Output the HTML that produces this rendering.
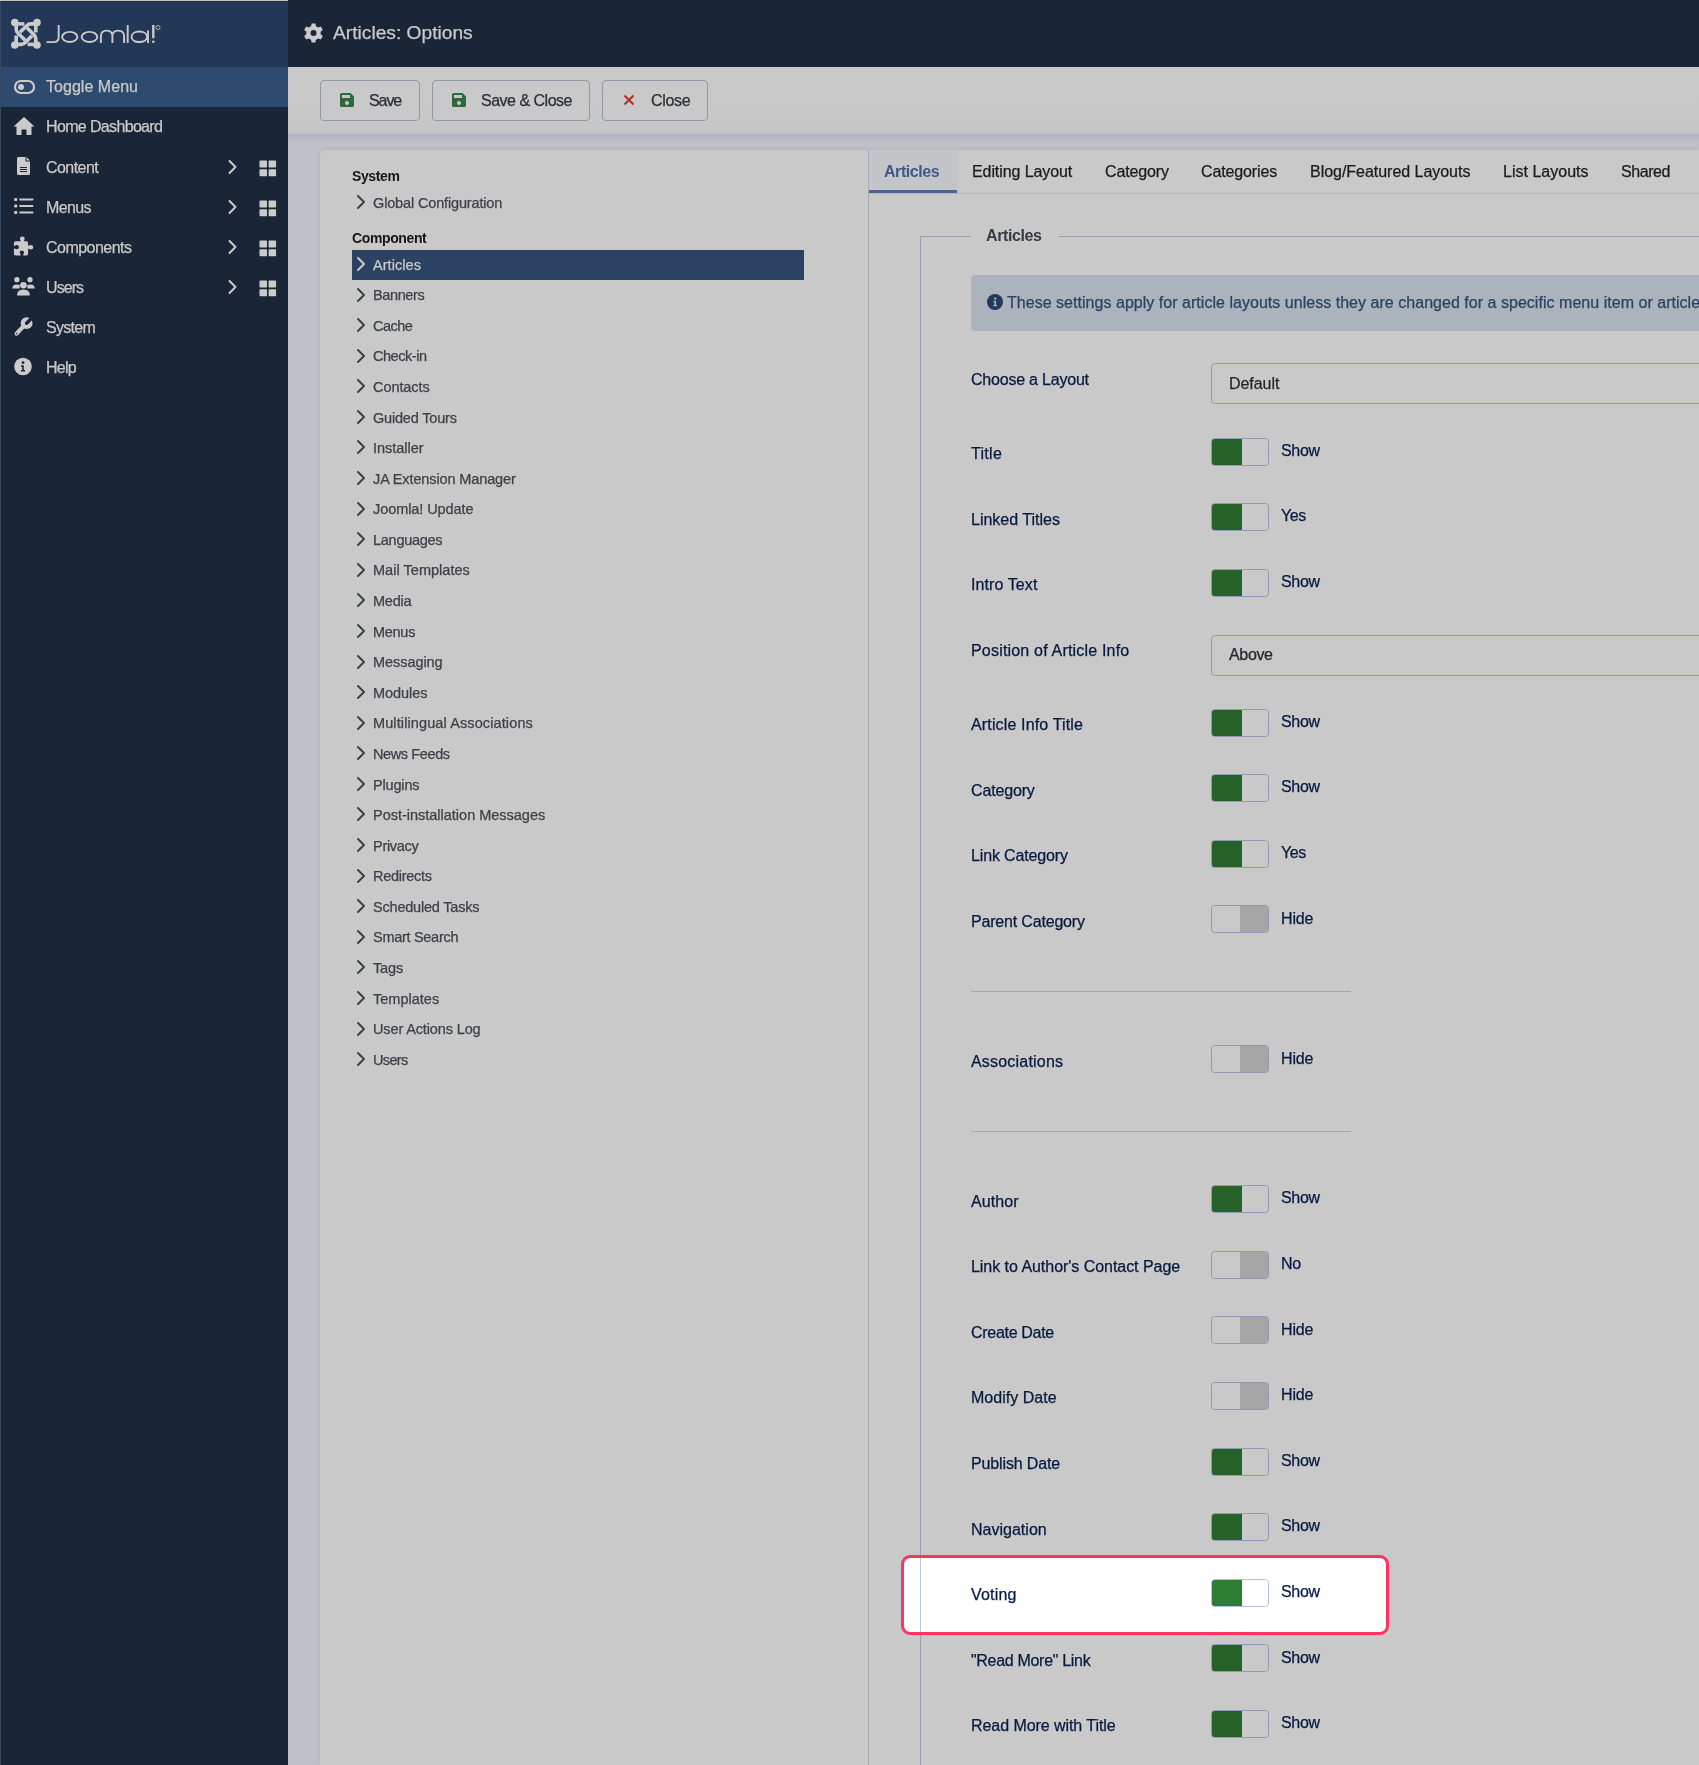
<!DOCTYPE html>
<html><head><meta charset="utf-8">
<style>
*{box-sizing:border-box}
html,body{margin:0;padding:0}
body{width:1699px;height:1765px;overflow:hidden;position:relative;background:#bec1c6;font-family:"Liberation Sans",sans-serif;}
.a{-webkit-text-stroke:0.25px currentColor;will-change:transform}
.a{position:absolute;white-space:nowrap}
.t16{font-size:16px;line-height:20px}
.t15{font-size:14.5px;line-height:20px}
#sb{position:absolute;left:0;top:0;width:288px;height:1765px;background:#1a2537}
#sbh{position:absolute;left:0;top:0;width:288px;height:67px;background:#233857}
#tog{position:absolute;left:0;top:67px;width:288px;height:40px;background:#2e4a6f}
.sbt{color:#cacaca;left:46px}
.sbi{position:absolute}
#hdr{position:absolute;left:288px;top:0;width:1411px;height:67px;background:#1a2537}
#tb{position:absolute;left:288px;top:67px;width:1411px;height:67px;background:linear-gradient(#c9c9c9 0,#c8c8c8 70%,#c3c5c8 100%)}
.btn{position:absolute;top:80px;height:41px;border:1px solid #8f98a6;border-radius:4px;background:#c9c9c9}
.btt{color:#2a2f36;top:91px}
#card{position:absolute;left:320px;top:150px;width:1379px;height:1615px;background:#c9c9c9;border-top-left-radius:5px;box-shadow:0 0 4px 1px rgba(130,145,180,.2)}
.tree{color:#3c4148;left:373px}
.chev{position:absolute;left:355px}
.lbl{color:#06193f;left:971px}
.sw{position:absolute;left:1211px;width:58px;height:28px;border:1px solid #8e9bb0;border-radius:3.5px;background:#c9c9c9;overflow:hidden}
.sw.on:before{content:"";position:absolute;left:0;top:0;width:30px;height:100%;background:#256129}
.sw.off:before{content:"";position:absolute;right:0;top:0;width:28px;height:100%;background:#a6a6a6}
.sw.on.v:before{background:#2e7d32}
.swt{color:#06193f;left:1281px}
.sel{position:absolute;left:1211px;width:520px;height:41px;border:1px solid #8e9bb0;border-radius:4px}
.tab{color:#1b1b1b;top:162px}
</style></head><body>
<div id="sb">
  <div id="sbh">
    <svg class="sbi" style="left:8px;top:16px" width="36" height="36" viewBox="0 0 36 36" fill="none" stroke="#cbcbcb" stroke-width="3.6" stroke-linecap="butt">
      <circle cx="6.8" cy="6.6" r="3.8" fill="#cbcbcb" stroke="none"/>
      <circle cx="29" cy="6.6" r="3.8" fill="#cbcbcb" stroke="none"/>
      <circle cx="6.8" cy="29" r="3.8" fill="#cbcbcb" stroke="none"/>
      <circle cx="29" cy="29" r="3.8" fill="#cbcbcb" stroke="none"/>
      <path d="M7 7.9H16.3"/>
      <path d="M8.2 7V13Q8.2 15.5 10 17.3L17.2 24.3"/>
      <path d="M27.8 7V16.5"/>
      <path d="M29 7.9H23Q20.5 7.9 18.7 9.7L12 16.3"/>
      <path d="M29 28.4H19.6"/>
      <path d="M27.8 29V23Q27.8 20.5 26 18.7L19 11.8"/>
      <path d="M8.2 29V19.5"/>
      <path d="M7 28.4H13Q15.5 28.4 17.3 26.6L24 19.8"/>
    </svg>
    <svg class="sbi" style="left:44px;top:22px" width="120" height="24" viewBox="0 0 120 24" fill="none" stroke="#cbcbcb" stroke-width="1.9">
      <path d="M14.65 3.1V15.5C14.65 19 12.5 20.1 9 20.1H2.5"/>
      <ellipse cx="25.75" cy="14.95" rx="7.6" ry="5.05"/>
      <ellipse cx="45.5" cy="14.95" rx="7.8" ry="5.05"/>
      <path d="M56.9 20.9V14.2C56.9 10.5 59.3 8.6 62.6 8.6C66 8.6 68.4 10.5 68.4 14.2V20.9M68.4 14.2C68.4 10.5 70.8 8.6 74.2 8.6C77.6 8.6 80.1 10.5 80.1 14.2V20.9"/>
      <path d="M83.7 3.1V20.9"/>
      <path d="M104 8.6V20.9M103.1 14.8C103.1 18 99.6 20.05 95.3 20.05C91 20.05 87.55 18 87.55 14.8C87.55 11.6 91 9.55 95.3 9.55C99.6 9.55 103.1 11.6 103.1 14.8"/>
      <path d="M109.3 3V16.2" stroke-width="2.4"/>
      <circle cx="109.3" cy="19.8" r="1.3" fill="#cbcbcb" stroke="none"/>
      <circle cx="114" cy="5.5" r="2" stroke-width="0.8"/>
    </svg>
  </div>
  <div id="tog"></div>
  <!-- icons -->
  <svg class="sbi" style="left:13px;top:79px" width="24" height="16" viewBox="0 0 24 16"><rect x="2" y="2" width="19" height="12" rx="6" fill="none" stroke="#cbcbcb" stroke-width="2.2"/><circle cx="8" cy="8" r="3" fill="#cbcbcb"/></svg>
  <svg class="sbi" style="left:12px;top:116px" width="24" height="20" viewBox="0 0 24 20"><path d="M12 1L1.5 10.5H4.5V19H9.5V13.5H14.5V19H19.5V10.5H22.5Z" fill="#cbcbcb"/></svg>
  <svg class="sbi" style="left:16px;top:156px" width="16" height="20" viewBox="0 0 16 20"><path d="M1 2.5Q1 1 2.5 1H9.5V5.5H14V17.5Q14 19 12.5 19H2.5Q1 19 1 17.5Z" fill="#cbcbcb"/><path d="M10.5 1L14 4.5H10.5Z" fill="#cbcbcb"/><path d="M4 11.5H11M4 13.5H11M4 15.5H11" stroke="#1a2537" stroke-width="1"/></svg>
  <svg class="sbi" style="left:13px;top:197px" width="22" height="18" viewBox="0 0 22 18"><rect x="1.2" y="1" width="3" height="3" rx="0.8" fill="#cbcbcb"/><rect x="1.2" y="7.5" width="3" height="3" rx="0.8" fill="#cbcbcb"/><rect x="1.2" y="14" width="3" height="3" rx="0.8" fill="#cbcbcb"/><path d="M7.2 2.5H19.5M7.2 9H19.5M7.2 15.5H19.5" stroke="#cbcbcb" stroke-width="2" stroke-linecap="round"/></svg>
  <svg class="sbi" style="left:13px;top:236px" width="22" height="22" viewBox="0 0 22 22"><g fill="#cbcbcb"><rect x="0.9" y="5.3" width="14.2" height="14.1" rx="1.6"/><circle cx="9.3" cy="2.8" r="2.4"/><rect x="7.8" y="3" width="3" height="3"/><circle cx="17.9" cy="11.2" r="2.3"/><rect x="14.5" y="9.7" width="2.8" height="3"/></g><g fill="#1a2537"><circle cx="3.8" cy="11.2" r="2.1"/><rect x="0" y="9.9" width="3.8" height="2.6"/><circle cx="8.9" cy="16.6" r="2.1"/><rect x="7.6" y="16.6" width="2.6" height="3.5"/></g></svg>
  <svg class="sbi" style="left:11px;top:276px" width="26" height="22" viewBox="0 0 26 22"><circle cx="5.9" cy="3.7" r="2.6" fill="#cbcbcb"/><circle cx="19" cy="3.7" r="2.6" fill="#cbcbcb"/><circle cx="12.4" cy="9.2" r="3.3" fill="#cbcbcb"/><path d="M1.3 12.6Q1.3 8.4 5.5 8.4Q8 8.4 9 9.3Q8.4 10.5 8.6 12.6Z" fill="#cbcbcb"/><path d="M23.7 12.6Q23.7 8.4 19.5 8.4Q17 8.4 16 9.3Q16.6 10.5 16.4 12.6Z" fill="#cbcbcb"/><path d="M6 19.4Q6 13.4 12.4 13.4Q18.9 13.4 18.9 19.4Z" fill="#cbcbcb"/></svg>
  <svg class="sbi" style="left:12px;top:316px" width="22" height="22" viewBox="0 0 22 22"><path d="M14.2 7.4L4.6 17.6" stroke="#cbcbcb" stroke-width="4.2" stroke-linecap="round"/><circle cx="14.6" cy="7.2" r="5.9" fill="#cbcbcb"/><path d="M14.6 7.2L21.5 0.3" stroke="#1a2537" stroke-width="3.4" stroke-linecap="round"/><circle cx="4.7" cy="17.5" r="0.8" fill="#1a2537"/></svg>
  <svg class="sbi" style="left:13px;top:357px" width="20" height="20" viewBox="0 0 20 20"><circle cx="10" cy="9.5" r="8.8" fill="#cbcbcb"/><circle cx="10" cy="5.6" r="1.4" fill="#1a2537"/><path d="M8 8.3H10.8V13H12V14.5H8V13H9.2V9.7H8Z" fill="#1a2537"/></svg>
  <!-- texts -->
  <div class="a t16 sbt" style="top:77.0px;letter-spacing:0.04px">Toggle Menu</div>
  <div class="a t16 sbt" style="top:117.2px;letter-spacing:-0.65px">Home Dashboard</div>
  <div class="a t16 sbt" style="top:157.7px;letter-spacing:-0.56px">Content</div>
  <div class="a t16 sbt" style="top:197.7px;letter-spacing:-0.6px">Menus</div>
  <div class="a t16 sbt" style="top:237.7px;letter-spacing:-0.52px">Components</div>
  <div class="a t16 sbt" style="top:277.7px;letter-spacing:-0.92px">Users</div>
  <div class="a t16 sbt" style="top:317.7px;letter-spacing:-0.69px">System</div>
  <div class="a t16 sbt" style="top:357.7px;letter-spacing:-0.77px">Help</div>
  <svg class="sbi" style="left:227px;top:159px" width="12" height="16" viewBox="0 0 12 16"><path d="M2.5 2L8.5 8L2.5 14" fill="none" stroke="#cbcbcb" stroke-width="2" stroke-linecap="round" stroke-linejoin="round"/></svg><svg class="sbi" style="left:259px;top:160px" width="18" height="17" viewBox="0 0 18 17"><rect x="0.5" y="0.5" width="7.5" height="7" rx="0.7" fill="#cbcbcb"/><rect x="9.6" y="0.5" width="7.5" height="7" rx="0.7" fill="#cbcbcb"/><rect x="0.5" y="9.3" width="7.5" height="7" rx="0.7" fill="#cbcbcb"/><rect x="9.6" y="9.3" width="7.5" height="7" rx="0.7" fill="#cbcbcb"/></svg><svg class="sbi" style="left:227px;top:199px" width="12" height="16" viewBox="0 0 12 16"><path d="M2.5 2L8.5 8L2.5 14" fill="none" stroke="#cbcbcb" stroke-width="2" stroke-linecap="round" stroke-linejoin="round"/></svg><svg class="sbi" style="left:259px;top:200px" width="18" height="17" viewBox="0 0 18 17"><rect x="0.5" y="0.5" width="7.5" height="7" rx="0.7" fill="#cbcbcb"/><rect x="9.6" y="0.5" width="7.5" height="7" rx="0.7" fill="#cbcbcb"/><rect x="0.5" y="9.3" width="7.5" height="7" rx="0.7" fill="#cbcbcb"/><rect x="9.6" y="9.3" width="7.5" height="7" rx="0.7" fill="#cbcbcb"/></svg><svg class="sbi" style="left:227px;top:239px" width="12" height="16" viewBox="0 0 12 16"><path d="M2.5 2L8.5 8L2.5 14" fill="none" stroke="#cbcbcb" stroke-width="2" stroke-linecap="round" stroke-linejoin="round"/></svg><svg class="sbi" style="left:259px;top:240px" width="18" height="17" viewBox="0 0 18 17"><rect x="0.5" y="0.5" width="7.5" height="7" rx="0.7" fill="#cbcbcb"/><rect x="9.6" y="0.5" width="7.5" height="7" rx="0.7" fill="#cbcbcb"/><rect x="0.5" y="9.3" width="7.5" height="7" rx="0.7" fill="#cbcbcb"/><rect x="9.6" y="9.3" width="7.5" height="7" rx="0.7" fill="#cbcbcb"/></svg><svg class="sbi" style="left:227px;top:279px" width="12" height="16" viewBox="0 0 12 16"><path d="M2.5 2L8.5 8L2.5 14" fill="none" stroke="#cbcbcb" stroke-width="2" stroke-linecap="round" stroke-linejoin="round"/></svg><svg class="sbi" style="left:259px;top:280px" width="18" height="17" viewBox="0 0 18 17"><rect x="0.5" y="0.5" width="7.5" height="7" rx="0.7" fill="#cbcbcb"/><rect x="9.6" y="0.5" width="7.5" height="7" rx="0.7" fill="#cbcbcb"/><rect x="0.5" y="9.3" width="7.5" height="7" rx="0.7" fill="#cbcbcb"/><rect x="9.6" y="9.3" width="7.5" height="7" rx="0.7" fill="#cbcbcb"/></svg>
</div>

<div class="a" style="left:0;top:0;width:1699px;height:1px;background:#c5c5c0"></div>
<div class="a" style="left:0;top:1px;width:288px;height:1px;background:#1d2f4c"></div>
<div class="a" style="left:288px;top:1px;width:1411px;height:1px;background:#111c2e"></div>
<div class="a" style="left:0;top:1px;width:1px;height:1764px;background:#374a63"></div>
<div id="hdr"></div>
<svg class="sbi" style="left:303px;top:22px" width="21" height="22" viewBox="0 0 21 22"><path fill="#cbcbcb" fill-rule="evenodd" d="M8.6 1.5H12.4L12.9 4.3Q14.2 4.8 15.2 5.6L17.9 4.6L19.8 7.9L17.6 9.7Q17.8 11 17.6 12.3L19.8 14.1L17.9 17.4L15.2 16.4Q14.2 17.2 12.9 17.7L12.4 20.5H8.6L8.1 17.7Q6.8 17.2 5.8 16.4L3.1 17.4L1.2 14.1L3.4 12.3Q3.2 11 3.4 9.7L1.2 7.9L3.1 4.6L5.8 5.6Q6.8 4.8 8.1 4.3ZM10.5 8A3 3 0 1 0 10.5 14A3 3 0 1 0 10.5 8Z"/></svg>
<div class="a" style="left:332.5px;top:21px;font-size:19.2px;line-height:24px;color:#cbcbcb">Articles: Options</div>
<div id="tb"></div>
<div class="btn" style="left:320px;width:100px"></div>
<svg class="sbi" style="left:340px;top:93px" width="14" height="14" viewBox="0 0 14 14"><path fill="#2c6a3a" fill-rule="evenodd" d="M1.5 0H10.5L14 3.5V12.5Q14 14 12.5 14H1.5Q0 14 0 12.5V1.5Q0 0 1.5 0ZM2 2V5H10V2ZM7 8A2 2 0 1 0 7 12A2 2 0 1 0 7 8Z"/></svg>
<div class="a t16 btt" style="left:369px;letter-spacing:-1.08px">Save</div>
<div class="btn" style="left:432px;width:158px"></div>
<svg class="sbi" style="left:452px;top:93px" width="14" height="14" viewBox="0 0 14 14"><path fill="#2c6a3a" fill-rule="evenodd" d="M1.5 0H10.5L14 3.5V12.5Q14 14 12.5 14H1.5Q0 14 0 12.5V1.5Q0 0 1.5 0ZM2 2V5H10V2ZM7 8A2 2 0 1 0 7 12A2 2 0 1 0 7 8Z"/></svg>
<div class="a t16 btt" style="left:481px;letter-spacing:-0.5px">Save &amp; Close</div>
<div class="btn" style="left:602px;width:106px"></div>
<svg class="sbi" style="left:623px;top:94px" width="12" height="12" viewBox="0 0 12 12"><path d="M1.5 1.5L10.5 10.5M10.5 1.5L1.5 10.5" stroke="#b02a2e" stroke-width="2"/></svg>
<div class="a t16 btt" style="left:651px;letter-spacing:-0.32px">Close</div>
<div class="a" style="left:288px;top:134px;width:1411px;height:12px;background:linear-gradient(rgba(160,168,188,.45),rgba(190,193,198,0) 70%)"></div>
<div id="card"></div>
<div class="a" style="left:868px;top:150px;width:1px;height:1615px;background:#a3abb7"></div>
<div class="a" style="left:352px;top:166px;font-size:14px;line-height:20px;font-weight:bold;color:#161616;-webkit-text-stroke:0;letter-spacing:-0.38px">System</div>
<div class="a" style="left:352px;top:228px;font-size:14px;line-height:20px;font-weight:bold;color:#161616;-webkit-text-stroke:0;letter-spacing:-0.38px">Component</div>
<div class="a" style="left:352px;top:250px;width:452px;height:30px;background:#2b4263"></div>
<svg class="chev" style="top:194px" width="12" height="16" viewBox="0 0 12 16"><path d="M3 2L9 8L3 14" fill="none" stroke="#3c4148" stroke-width="2" stroke-linecap="round" stroke-linejoin="round"/></svg><div class="a t15 tree" style="top:192.8px;color:#3c4148;letter-spacing:-0.15px">Global Configuration</div>
<svg class="chev" style="top:256px" width="12" height="16" viewBox="0 0 12 16"><path d="M3 2L9 8L3 14" fill="none" stroke="#cbcbcb" stroke-width="2" stroke-linecap="round" stroke-linejoin="round"/></svg><div class="a t15 tree" style="top:254.6px;color:#cbcbcb;letter-spacing:0.05px">Articles</div>
<svg class="chev" style="top:287px" width="12" height="16" viewBox="0 0 12 16"><path d="M3 2L9 8L3 14" fill="none" stroke="#3c4148" stroke-width="2" stroke-linecap="round" stroke-linejoin="round"/></svg><div class="a t15 tree" style="top:285.2px;color:#3c4148;letter-spacing:-0.38px">Banners</div>
<svg class="chev" style="top:317px" width="12" height="16" viewBox="0 0 12 16"><path d="M3 2L9 8L3 14" fill="none" stroke="#3c4148" stroke-width="2" stroke-linecap="round" stroke-linejoin="round"/></svg><div class="a t15 tree" style="top:315.8px;color:#3c4148;letter-spacing:-0.55px">Cache</div>
<svg class="chev" style="top:348px" width="12" height="16" viewBox="0 0 12 16"><path d="M3 2L9 8L3 14" fill="none" stroke="#3c4148" stroke-width="2" stroke-linecap="round" stroke-linejoin="round"/></svg><div class="a t15 tree" style="top:346.4px;color:#3c4148;letter-spacing:-0.46px">Check-in</div>
<svg class="chev" style="top:378px" width="12" height="16" viewBox="0 0 12 16"><path d="M3 2L9 8L3 14" fill="none" stroke="#3c4148" stroke-width="2" stroke-linecap="round" stroke-linejoin="round"/></svg><div class="a t15 tree" style="top:376.9px;color:#3c4148;letter-spacing:-0.07px">Contacts</div>
<svg class="chev" style="top:409px" width="12" height="16" viewBox="0 0 12 16"><path d="M3 2L9 8L3 14" fill="none" stroke="#3c4148" stroke-width="2" stroke-linecap="round" stroke-linejoin="round"/></svg><div class="a t15 tree" style="top:407.5px;color:#3c4148;letter-spacing:-0.19px">Guided Tours</div>
<svg class="chev" style="top:439px" width="12" height="16" viewBox="0 0 12 16"><path d="M3 2L9 8L3 14" fill="none" stroke="#3c4148" stroke-width="2" stroke-linecap="round" stroke-linejoin="round"/></svg><div class="a t15 tree" style="top:438.1px;color:#3c4148;letter-spacing:-0.02px">Installer</div>
<svg class="chev" style="top:470px" width="12" height="16" viewBox="0 0 12 16"><path d="M3 2L9 8L3 14" fill="none" stroke="#3c4148" stroke-width="2" stroke-linecap="round" stroke-linejoin="round"/></svg><div class="a t15 tree" style="top:468.7px;color:#3c4148;letter-spacing:-0.12px">JA Extension Manager</div>
<svg class="chev" style="top:501px" width="12" height="16" viewBox="0 0 12 16"><path d="M3 2L9 8L3 14" fill="none" stroke="#3c4148" stroke-width="2" stroke-linecap="round" stroke-linejoin="round"/></svg><div class="a t15 tree" style="top:499.3px;color:#3c4148;letter-spacing:-0.08px">Joomla! Update</div>
<svg class="chev" style="top:531px" width="12" height="16" viewBox="0 0 12 16"><path d="M3 2L9 8L3 14" fill="none" stroke="#3c4148" stroke-width="2" stroke-linecap="round" stroke-linejoin="round"/></svg><div class="a t15 tree" style="top:529.8px;color:#3c4148;letter-spacing:-0.27px">Languages</div>
<svg class="chev" style="top:562px" width="12" height="16" viewBox="0 0 12 16"><path d="M3 2L9 8L3 14" fill="none" stroke="#3c4148" stroke-width="2" stroke-linecap="round" stroke-linejoin="round"/></svg><div class="a t15 tree" style="top:560.4px;color:#3c4148;letter-spacing:0.03px">Mail Templates</div>
<svg class="chev" style="top:592px" width="12" height="16" viewBox="0 0 12 16"><path d="M3 2L9 8L3 14" fill="none" stroke="#3c4148" stroke-width="2" stroke-linecap="round" stroke-linejoin="round"/></svg><div class="a t15 tree" style="top:591.0px;color:#3c4148;letter-spacing:-0.24px">Media</div>
<svg class="chev" style="top:623px" width="12" height="16" viewBox="0 0 12 16"><path d="M3 2L9 8L3 14" fill="none" stroke="#3c4148" stroke-width="2" stroke-linecap="round" stroke-linejoin="round"/></svg><div class="a t15 tree" style="top:621.6px;color:#3c4148;letter-spacing:-0.28px">Menus</div>
<svg class="chev" style="top:654px" width="12" height="16" viewBox="0 0 12 16"><path d="M3 2L9 8L3 14" fill="none" stroke="#3c4148" stroke-width="2" stroke-linecap="round" stroke-linejoin="round"/></svg><div class="a t15 tree" style="top:652.2px;color:#3c4148;letter-spacing:-0.06px">Messaging</div>
<svg class="chev" style="top:684px" width="12" height="16" viewBox="0 0 12 16"><path d="M3 2L9 8L3 14" fill="none" stroke="#3c4148" stroke-width="2" stroke-linecap="round" stroke-linejoin="round"/></svg><div class="a t15 tree" style="top:682.7px;color:#3c4148;letter-spacing:-0.07px">Modules</div>
<svg class="chev" style="top:715px" width="12" height="16" viewBox="0 0 12 16"><path d="M3 2L9 8L3 14" fill="none" stroke="#3c4148" stroke-width="2" stroke-linecap="round" stroke-linejoin="round"/></svg><div class="a t15 tree" style="top:713.3px;color:#3c4148;letter-spacing:0.11px">Multilingual Associations</div>
<svg class="chev" style="top:745px" width="12" height="16" viewBox="0 0 12 16"><path d="M3 2L9 8L3 14" fill="none" stroke="#3c4148" stroke-width="2" stroke-linecap="round" stroke-linejoin="round"/></svg><div class="a t15 tree" style="top:743.9px;color:#3c4148;letter-spacing:-0.39px">News Feeds</div>
<svg class="chev" style="top:776px" width="12" height="16" viewBox="0 0 12 16"><path d="M3 2L9 8L3 14" fill="none" stroke="#3c4148" stroke-width="2" stroke-linecap="round" stroke-linejoin="round"/></svg><div class="a t15 tree" style="top:774.5px;color:#3c4148;letter-spacing:-0.17px">Plugins</div>
<svg class="chev" style="top:806px" width="12" height="16" viewBox="0 0 12 16"><path d="M3 2L9 8L3 14" fill="none" stroke="#3c4148" stroke-width="2" stroke-linecap="round" stroke-linejoin="round"/></svg><div class="a t15 tree" style="top:805.1px;color:#3c4148;letter-spacing:-0.01px">Post-installation Messages</div>
<svg class="chev" style="top:837px" width="12" height="16" viewBox="0 0 12 16"><path d="M3 2L9 8L3 14" fill="none" stroke="#3c4148" stroke-width="2" stroke-linecap="round" stroke-linejoin="round"/></svg><div class="a t15 tree" style="top:835.6px;color:#3c4148;letter-spacing:-0.29px">Privacy</div>
<svg class="chev" style="top:868px" width="12" height="16" viewBox="0 0 12 16"><path d="M3 2L9 8L3 14" fill="none" stroke="#3c4148" stroke-width="2" stroke-linecap="round" stroke-linejoin="round"/></svg><div class="a t15 tree" style="top:866.2px;color:#3c4148;letter-spacing:-0.28px">Redirects</div>
<svg class="chev" style="top:898px" width="12" height="16" viewBox="0 0 12 16"><path d="M3 2L9 8L3 14" fill="none" stroke="#3c4148" stroke-width="2" stroke-linecap="round" stroke-linejoin="round"/></svg><div class="a t15 tree" style="top:896.8px;color:#3c4148;letter-spacing:-0.2px">Scheduled Tasks</div>
<svg class="chev" style="top:929px" width="12" height="16" viewBox="0 0 12 16"><path d="M3 2L9 8L3 14" fill="none" stroke="#3c4148" stroke-width="2" stroke-linecap="round" stroke-linejoin="round"/></svg><div class="a t15 tree" style="top:927.4px;color:#3c4148;letter-spacing:-0.29px">Smart Search</div>
<svg class="chev" style="top:959px" width="12" height="16" viewBox="0 0 12 16"><path d="M3 2L9 8L3 14" fill="none" stroke="#3c4148" stroke-width="2" stroke-linecap="round" stroke-linejoin="round"/></svg><div class="a t15 tree" style="top:958.0px;color:#3c4148;letter-spacing:-0.15px">Tags</div>
<svg class="chev" style="top:990px" width="12" height="16" viewBox="0 0 12 16"><path d="M3 2L9 8L3 14" fill="none" stroke="#3c4148" stroke-width="2" stroke-linecap="round" stroke-linejoin="round"/></svg><div class="a t15 tree" style="top:988.5px;color:#3c4148;letter-spacing:0.01px">Templates</div>
<svg class="chev" style="top:1021px" width="12" height="16" viewBox="0 0 12 16"><path d="M3 2L9 8L3 14" fill="none" stroke="#3c4148" stroke-width="2" stroke-linecap="round" stroke-linejoin="round"/></svg><div class="a t15 tree" style="top:1019.1px;color:#3c4148;letter-spacing:-0.13px">User Actions Log</div>
<svg class="chev" style="top:1051px" width="12" height="16" viewBox="0 0 12 16"><path d="M3 2L9 8L3 14" fill="none" stroke="#3c4148" stroke-width="2" stroke-linecap="round" stroke-linejoin="round"/></svg><div class="a t15 tree" style="top:1049.7px;color:#3c4148;letter-spacing:-0.66px">Users</div>
<div class="a" style="left:869px;top:150px;width:88px;height:43px;background:#c3c5c9"></div>
<div class="a" style="left:869px;top:193px;width:830px;height:1px;background:#b1b8c4"></div>
<div class="a" style="left:869px;top:190px;width:88px;height:3px;background:#4b6690"></div>
<div class="a t16 tab" style="left:884.2px;font-weight:bold;color:#3d5a85;-webkit-text-stroke:0;letter-spacing:-0.44px">Articles</div>
<div class="a t16 tab" style="left:971.8px;letter-spacing:-0.09px">Editing Layout</div>
<div class="a t16 tab" style="left:1104.6px;letter-spacing:-0.13px">Category</div>
<div class="a t16 tab" style="left:1200.8px;letter-spacing:-0.12px">Categories</div>
<div class="a t16 tab" style="left:1310.1px;letter-spacing:-0.03px">Blog/Featured Layouts</div>
<div class="a t16 tab" style="left:1502.6px;letter-spacing:0.01px">List Layouts</div>
<div class="a t16 tab" style="left:1621.1px;letter-spacing:-0.42px">Shared</div>
<div class="a" style="left:920px;top:236px;width:1px;height:1529px;background:#93a1b3"></div>
<div class="a" style="left:920px;top:236px;width:51px;height:1px;background:#93a1b3"></div>
<div class="a" style="left:1059px;top:236px;width:640px;height:1px;background:#93a1b3"></div>
<div class="a t16" style="left:986px;top:226px;font-weight:bold;color:#363c44;-webkit-text-stroke:0;letter-spacing:-0.39px">Articles</div>
<div class="a" style="left:971px;top:275px;width:760px;height:56px;background:#adb3bd;border-radius:4px"></div>
<svg class="sbi" style="left:987px;top:294px" width="16" height="16" viewBox="0 0 16 16"><circle cx="8" cy="8" r="8" fill="#223a5e"/><circle cx="8.2" cy="4.6" r="1.2" fill="#adb3bd"/><path d="M6.5 6.8H9V10.8H10V12.2H6.5V10.8H7.5V8.2H6.5Z" fill="#adb3bd"/></svg>
<div class="a t16" style="left:1007px;top:293px;color:#2a4263;letter-spacing:0.03px">These settings apply for article layouts unless they are changed for a specific menu item or article.</div>
<div class="a t16 lbl" style="top:369.7px;letter-spacing:-0.21px">Choose a Layout</div>
<div class="sel" style="top:363.3px"></div>
<div class="a t16" style="left:1228.6px;top:373.7px;color:#23272c;letter-spacing:-0.05px">Default</div>
<div class="a t16 lbl" style="top:443.9px;letter-spacing:0.29px">Title</div>
<div class="sw on" style="top:437.5px"></div>
<div class="a t16 swt" style="top:440.7px;letter-spacing:-0.32px">Show</div>
<div class="a t16 lbl" style="top:509.5px;letter-spacing:0.0px">Linked Titles</div>
<div class="sw on" style="top:503.1px"></div>
<div class="a t16 swt" style="top:506.3px;letter-spacing:-0.4px">Yes</div>
<div class="a t16 lbl" style="top:575.1px;letter-spacing:0.1px">Intro Text</div>
<div class="sw on" style="top:568.7px"></div>
<div class="a t16 swt" style="top:571.9px;letter-spacing:-0.32px">Show</div>
<div class="a t16 lbl" style="top:640.9px;letter-spacing:0.19px">Position of Article Info</div>
<div class="sel" style="top:634.5px"></div>
<div class="a t16" style="left:1228.6px;top:644.9px;color:#23272c;letter-spacing:-0.34px">Above</div>
<div class="a t16 lbl" style="top:714.9px;letter-spacing:0.15px">Article Info Title</div>
<div class="sw on" style="top:708.5px"></div>
<div class="a t16 swt" style="top:711.7px;letter-spacing:-0.32px">Show</div>
<div class="a t16 lbl" style="top:780.5px;letter-spacing:-0.16px">Category</div>
<div class="sw on" style="top:774.1px"></div>
<div class="a t16 swt" style="top:777.3px;letter-spacing:-0.32px">Show</div>
<div class="a t16 lbl" style="top:846.1px;letter-spacing:-0.14px">Link Category</div>
<div class="sw on" style="top:839.7px"></div>
<div class="a t16 swt" style="top:842.9px;letter-spacing:-0.4px">Yes</div>
<div class="a t16 lbl" style="top:911.7px;letter-spacing:-0.18px">Parent Category</div>
<div class="sw off" style="top:905.3px"></div>
<div class="a t16 swt" style="top:908.5px;letter-spacing:-0.13px">Hide</div>
<div class="a t16 lbl" style="top:1051.7px;letter-spacing:0.2px">Associations</div>
<div class="sw off" style="top:1045.3px"></div>
<div class="a t16 swt" style="top:1048.5px;letter-spacing:-0.13px">Hide</div>
<div class="a t16 lbl" style="top:1191.6px;letter-spacing:0.07px">Author</div>
<div class="sw on" style="top:1185.2px"></div>
<div class="a t16 swt" style="top:1188.4px;letter-spacing:-0.32px">Show</div>
<div class="a t16 lbl" style="top:1257.2px;letter-spacing:-0.04px">Link to Author's Contact Page</div>
<div class="sw off" style="top:1250.8px"></div>
<div class="a t16 swt" style="top:1254.0px;letter-spacing:-0.25px">No</div>
<div class="a t16 lbl" style="top:1322.8px;letter-spacing:-0.3px">Create Date</div>
<div class="sw off" style="top:1316.4px"></div>
<div class="a t16 swt" style="top:1319.6px;letter-spacing:-0.13px">Hide</div>
<div class="a t16 lbl" style="top:1388.4px;letter-spacing:0.03px">Modify Date</div>
<div class="sw off" style="top:1382.0px"></div>
<div class="a t16 swt" style="top:1385.2px;letter-spacing:-0.13px">Hide</div>
<div class="a t16 lbl" style="top:1454.0px;letter-spacing:-0.14px">Publish Date</div>
<div class="sw on" style="top:1447.6px"></div>
<div class="a t16 swt" style="top:1450.8px;letter-spacing:-0.32px">Show</div>
<div class="a t16 lbl" style="top:1519.6px;letter-spacing:0.01px">Navigation</div>
<div class="sw on" style="top:1513.2px"></div>
<div class="a t16 swt" style="top:1516.4px;letter-spacing:-0.32px">Show</div>
<div class="a t16 lbl" style="top:1650.8px;letter-spacing:-0.31px">"Read More" Link</div>
<div class="sw on" style="top:1644.4px"></div>
<div class="a t16 swt" style="top:1647.6px;letter-spacing:-0.32px">Show</div>
<div class="a t16 lbl" style="top:1716.4px;letter-spacing:-0.06px">Read More with Title</div>
<div class="sw on" style="top:1710.0px"></div>
<div class="a t16 swt" style="top:1713.2px;letter-spacing:-0.32px">Show</div>
<div class="a" style="left:971px;top:991px;width:380px;height:1px;background:#a8a8a8"></div>
<div class="a" style="left:971px;top:1131px;width:380px;height:1px;background:#a8a8a8"></div>
<div class="a" style="left:901px;top:1555px;width:488px;height:80px;background:#fff;border:3.2px solid #fd3461;border-radius:9px"></div>
<div class="a" style="left:920px;top:1558px;width:1px;height:74px;background:#b6c7dc"></div>
<div class="a t16 lbl" style="top:1585.2px;color:#001b4c;letter-spacing:0.2px">Voting</div>
<div class="sw on v" style="top:1578.8px;background:#fff;border-color:#b2c4de"></div>
<div class="a t16 swt" style="top:1582.0px;color:#001b4c;letter-spacing:-0.32px">Show</div>
</body></html>
